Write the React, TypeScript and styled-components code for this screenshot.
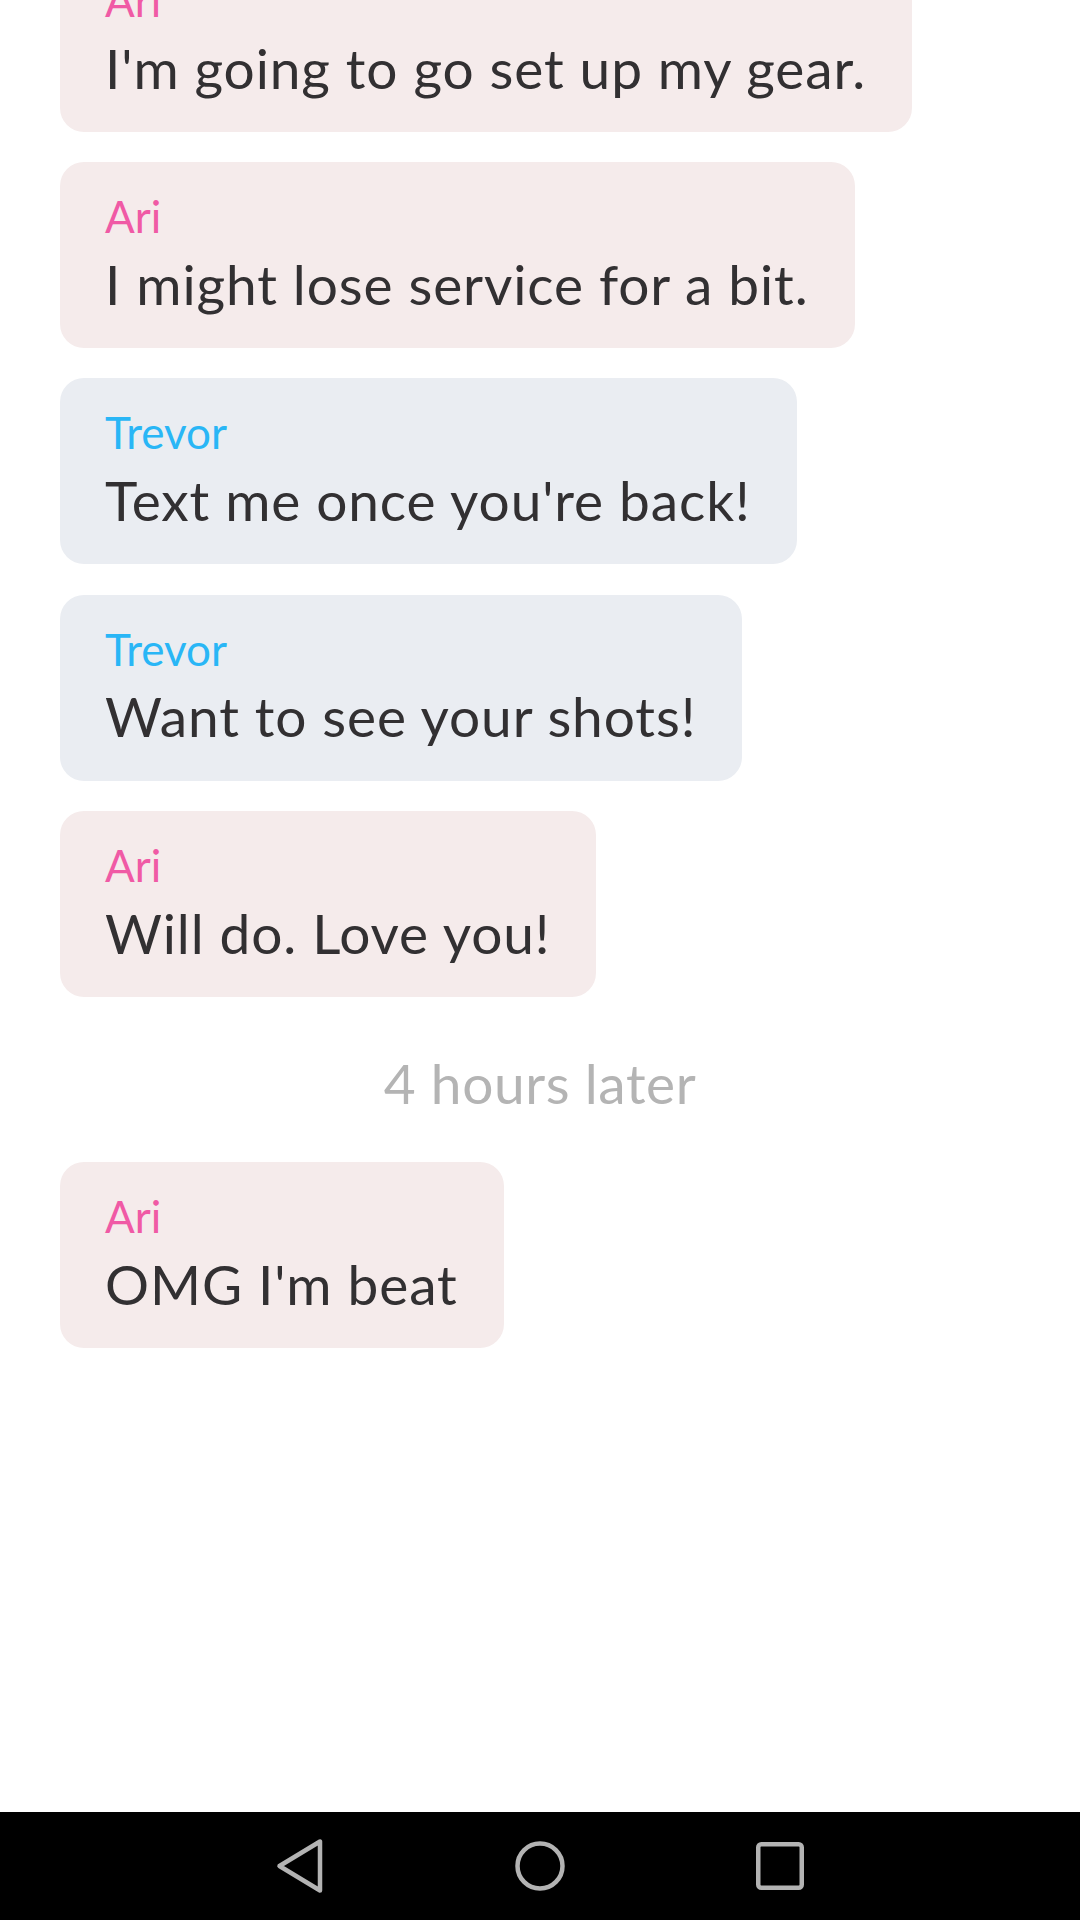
import React from "react";
import styled, { createGlobalStyle } from "styled-components";

const GlobalStyle = createGlobalStyle`
  html, body {
    margin: 0;
    padding: 0;
    background: #ffffff;
  }
  body {
    font-family: Lato, "Noto Sans", sans-serif;
  }
`;

const Screen = styled.div`
  width: 1080px;
  height: 1920px;
  display: flex;
  flex-direction: column;
  background: #ffffff;
  overflow: hidden;
`;

const Conversation = styled.div`
  flex: 1;
  overflow: hidden;
`;

const MessageList = styled.div`
  display: flex;
  flex-direction: column;
  align-items: flex-start;
  gap: 30.2px;
  padding: 0 60px;
  margin-top: -54px;
`;

type Who = "ari" | "trevor";

const Bubble = styled.div<{ $who: Who }>`
  box-sizing: border-box;
  height: 186px;
  padding: 28px 46px 0 45px;
  border-radius: 24px;
  background: ${(p) => (p.$who === "ari" ? "#f5ebeb" : "#eaedf2")};
  display: flex;
  flex-direction: column;
  gap: 8px;
`;

const Sender = styled.div<{ $who: Who }>`
  font-family: Lato, "Noto Sans", sans-serif;
  font-size: 44px;
  line-height: 52.8px;
  color: ${(p) => (p.$who === "ari" ? "#f05aa5" : "#29b6f6")};
  white-space: nowrap;
`;

const Body = styled.div`
  font-family: Lato, "Noto Sans", sans-serif;
  font-size: 55px;
  line-height: 66px;
  letter-spacing: 0.9px;
  color: #323032;
  white-space: nowrap;
`;

const TimeGap = styled.div`
  align-self: stretch;
  display: flex;
  justify-content: center;
  font-family: Lato, "Noto Sans", sans-serif;
  font-size: 55px;
  line-height: 66px;
  letter-spacing: 0.6px;
  color: #b4b4b4;
  padding: 23px 0 16px;
  margin-left: -60px;
  margin-right: -60px;
`;

const NavBar = styled.div`
  height: 108px;
  flex-shrink: 0;
  background: #000000;
  display: flex;
  align-items: center;
  justify-content: center;
`;

const NavButton = styled.div`
  width: 240px;
  height: 108px;
  display: flex;
  align-items: center;
  justify-content: center;
`;

type Msg = { who: Who; text: string } | { gap: string };

const messages: Msg[] = [
  { who: "ari", text: "I'm going to go set up my gear." },
  { who: "ari", text: "I might lose service for a bit." },
  { who: "trevor", text: "Text me once you're back!" },
  { who: "trevor", text: "Want to see your shots!" },
  { who: "ari", text: "Will do. Love you!" },
  { gap: "4 hours later" },
  { who: "ari", text: "OMG I'm beat" },
];

const names: Record<Who, string> = { ari: "Ari", trevor: "Trevor" };

export default function App() {
  return (
    <>
      <GlobalStyle />
      <Screen>
        <Conversation>
          <MessageList>
            {messages.map((m, i) =>
              "gap" in m ? (
                <TimeGap key={i}>{m.gap}</TimeGap>
              ) : (
                <Bubble key={i} $who={m.who}>
                  <Sender $who={m.who}>{names[m.who]}</Sender>
                  <Body>{m.text}</Body>
                </Bubble>
              )
            )}
          </MessageList>
        </Conversation>
        <NavBar>
          <NavButton>
            <svg width="50" height="56" viewBox="0 0 50 56">
              <path
                d="M45 3.5 L45 52.5 L4.5 28 Z"
                fill="none"
                stroke="#b3b3b3"
                strokeWidth="4.5"
                strokeLinejoin="round"
              />
            </svg>
          </NavButton>
          <NavButton>
            <svg width="54" height="54" viewBox="0 0 54 54">
              <circle cx="27" cy="27" r="22.5" fill="none" stroke="#b3b3b3" strokeWidth="4.5" />
            </svg>
          </NavButton>
          <NavButton>
            <svg width="54" height="54" viewBox="0 0 54 54">
              <rect x="5.25" y="5.25" width="43.5" height="43.5" rx="3" fill="none" stroke="#b3b3b3" strokeWidth="4.5" />
            </svg>
          </NavButton>
        </NavBar>
      </Screen>
    </>
  );
}
